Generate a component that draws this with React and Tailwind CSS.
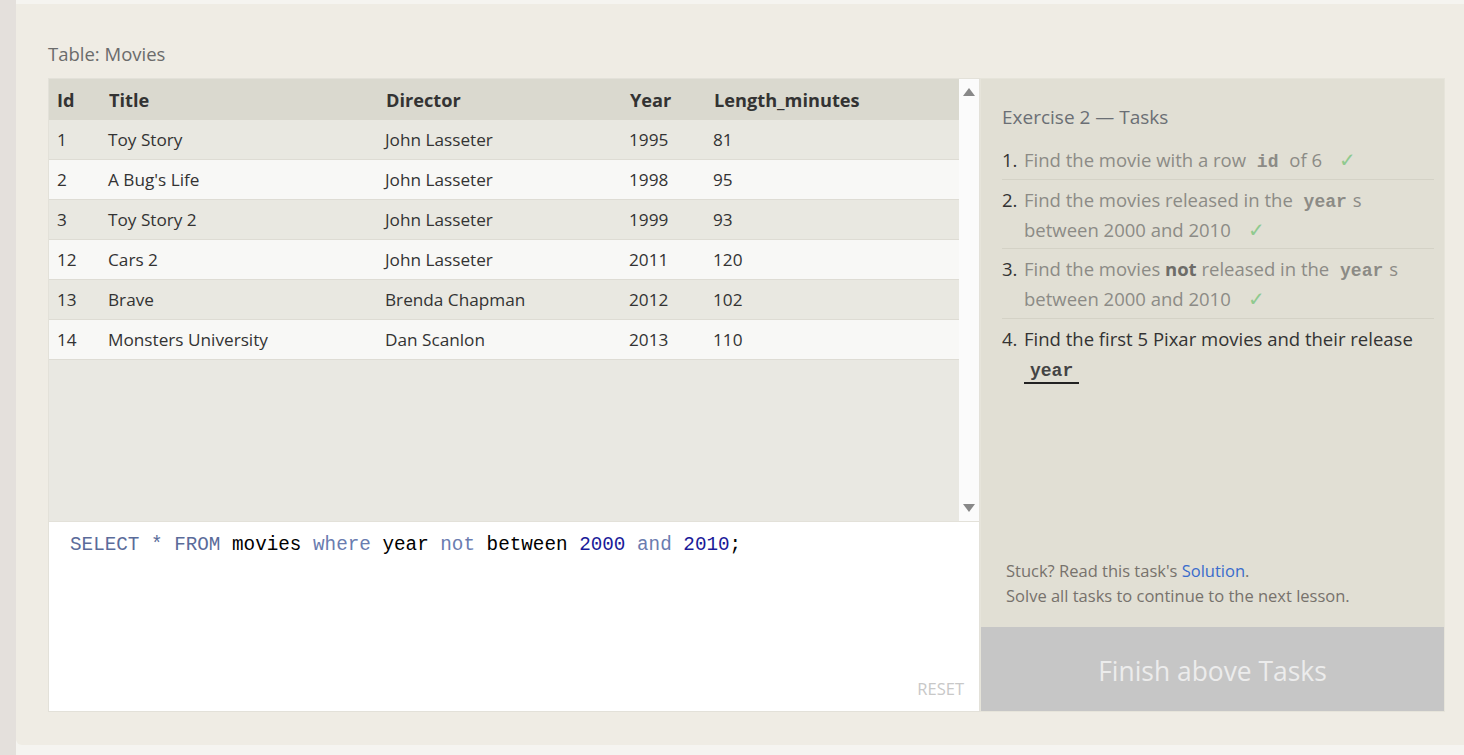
const movies = [
  { id: 1, title: "Toy Story", director: "John Lasseter", year: 1995, length: 81 },
  { id: 2, title: "A Bug's Life", director: "John Lasseter", year: 1998, length: 95 },
  { id: 3, title: "Toy Story 2", director: "John Lasseter", year: 1999, length: 93 },
  { id: 12, title: "Cars 2", director: "John Lasseter", year: 2011, length: 120 },
  { id: 13, title: "Brave", director: "Brenda Chapman", year: 2012, length: 102 },
  { id: 14, title: "Monsters University", director: "Dan Scanlon", year: 2013, length: 110 },
];

const cols = "grid grid-cols-[52px_277px_244px_84px_1fr] px-2 items-center";

function Check() {
  return <span className="ml-3 text-[20px] leading-none text-[#8fca8f]">✓</span>;
}

function Code({ children, className = "" }) {
  return (
    <code className={"font-['Liberation_Mono',monospace] font-bold text-[18px] leading-none px-1.5 " + className}>
      {children}
    </code>
  );
}

export default function App() {
  return (
    <div className="min-h-[755px] bg-[#f5f4f0] flex font-['Open_Sans',sans-serif]">
      <div className="w-4 shrink-0 bg-[#e4e0dc]" />
      <div className="flex-1 pt-1 pb-2.5">
        <div className="bg-[#efece4] rounded-bl-md h-[741px] pl-8 pr-[19px] pt-[40px]">
          <div className="text-[18.5px] leading-[20px] text-[#6b6b6b] mb-[14px]">Table: Movies</div>

          <div className="flex h-[634px]">
            <div className="w-[932px] flex flex-col border border-[#e3e1d9]">
              <div className="flex h-[442px]">
                <div className="flex-1 bg-[#e9e8e2] text-[#333]">
                  <div className={cols + " h-[41px] pt-[3px] bg-[#dad9cf] font-bold text-[18.2px]"}>
                    <span>Id</span>
                    <span>Title</span>
                    <span>Director</span>
                    <span>Year</span>
                    <span>Length_minutes</span>
                  </div>
                  {movies.map((m, i) => (
                    <div
                      key={m.id}
                      className={
                        cols +
                        " h-10 text-[17.2px] border-b border-[#dedcd4] " +
                        (i % 2 === 0 ? "bg-[#e9e8e1]" : "bg-[#f8f8f6]")
                      }
                    >
                      <span>{m.id}</span>
                      <span className="-ml-px">{m.title}</span>
                      <span className="-ml-px">{m.director}</span>
                      <span className="-ml-px">{m.year}</span>
                      <span className="-ml-px">{m.length}</span>
                    </div>
                  ))}
                </div>
                <div className="w-5 bg-[#fbfbfb] flex flex-col items-center justify-between py-[9px]">
                  <div className="w-0 h-0 border-x-[6px] border-x-transparent border-b-[8px] border-b-[#888]" />
                  <div className="w-0 h-0 border-x-[6px] border-x-transparent border-t-[8px] border-t-[#888]" />
                </div>
              </div>
              <div className="flex-1 bg-white relative border-t border-[#e3e1d9]">
                <div className="pl-[21px] pt-[11px] font-['Liberation_Mono',monospace] text-[19.3px] leading-[24px] whitespace-pre">
                  <span className="text-[#5a6b9a]">SELECT * FROM</span>
                  <span className="text-black"> movies </span>
                  <span className="text-[#6a7cb0]">where</span>
                  <span className="text-black"> year </span>
                  <span className="text-[#6a7cb0]">not</span>
                  <span className="text-black"> between </span>
                  <span className="text-[#1a1a99]">2000</span>
                  <span className="text-[#6a7cb0]"> and </span>
                  <span className="text-[#1a1a99]">2010</span>
                  <span className="text-black">;</span>
                </div>
                <div className="absolute right-[15px] bottom-[9px] text-[16.5px] text-[#c8c8c8]">RESET</div>
              </div>
            </div>

            <div className="w-[465px] flex flex-col bg-[#e1dfd4] border border-[#e6e4da]">
              <div className="flex-1 pl-[21px] pr-[10px] pt-[25px] flex flex-col">
                <div className="text-[19px] text-[#6b6f75] leading-[26px] mb-[15px]">Exercise 2 — Tasks</div>
                <ol className="text-[18.5px] leading-[30px] text-[#8c8b86]">
                  <li className="flex border-b border-[#d4d2c6] pb-[4px]">
                    <span className="w-[22px] shrink-0 text-[#333]">1.</span>
                    <span>
                      Find the movie with a row <Code>id</Code> of 6 <Check />
                    </span>
                  </li>
                  <li className="flex border-b border-[#d4d2c6] pt-[5px] pb-[3px]">
                    <span className="w-[22px] shrink-0 text-[#333]">2.</span>
                    <span>
                      Find the movies released in the <Code>year</Code>s
                      <br />
                      between 2000 and 2010 <Check />
                    </span>
                  </li>
                  <li className="flex border-b border-[#d4d2c6] pt-[5px] pb-[4px]">
                    <span className="w-[22px] shrink-0 text-[#333]">3.</span>
                    <span>
                      Find the movies <b className="text-[#6d6c68]">not</b> released in the <Code>year</Code>s
                      <br />
                      between 2000 and 2010 <Check />
                    </span>
                  </li>
                  <li className="flex pt-[5px] text-[#333]">
                    <span className="w-[22px] shrink-0">4.</span>
                    <span>
                      Find the first 5 Pixar movies and their release
                      <br />
                      <Code className="border-b-2 border-[#222] text-[#444] pb-[1px]">year</Code>
                    </span>
                  </li>
                </ol>
                <div className="mt-auto mb-[19px] text-[16.5px] leading-[25px] text-[#77726c] pl-1">
                  <div>
                    Stuck? Read this task's <span className="text-[#3a6ccc]">Solution</span>.
                  </div>
                  <div>Solve all tasks to continue to the next lesson.</div>
                </div>
              </div>
              <div className="h-[84px] bg-[#c6c6c6] flex items-center justify-center text-[26.4px] text-[#ececec] pt-[5px]">
                Finish above Tasks
              </div>
            </div>
          </div>
        </div>
      </div>
    </div>
  );
}
